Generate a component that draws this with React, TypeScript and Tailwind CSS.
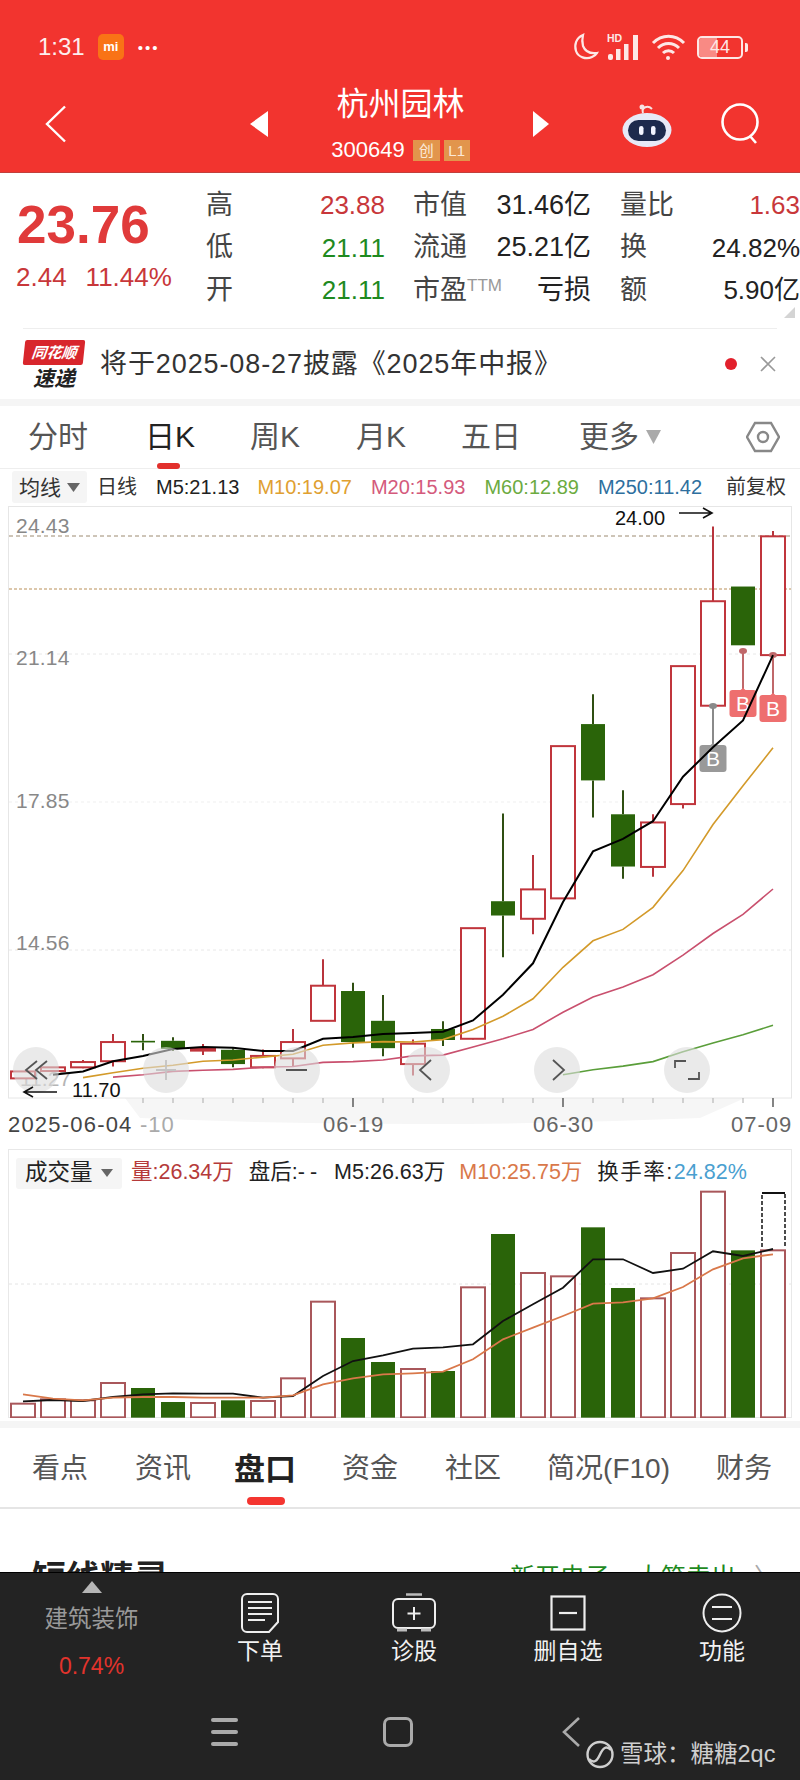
type Candle = { up: boolean; top: number; bottom: number; hi?: number; lo?: number };

// chart values are read off the picture, sy() maps them to page y
const sy = (v: number) => 500 + v / 2.45;
const vy = (v: number) => 1140 + v / 3;
const cx = (i: number) => 23 + 30 * i;

const candles: Candle[] = [
  { up: true, top: 1400, bottom: 1417 },
  { up: true, top: 1390, bottom: 1399 },
  { up: true, top: 1377, bottom: 1390, hi: 1372, lo: 1392 },
  { up: true, top: 1328, bottom: 1375, hi: 1308, lo: 1388 },
  { up: false, top: 1325, bottom: 1329, hi: 1308, lo: 1348 },
  { up: false, top: 1325, bottom: 1345, hi: 1316, lo: 1350 },
  { up: true, top: 1345, bottom: 1349, hi: 1333, lo: 1360 },
  { up: false, top: 1347, bottom: 1382, hi: 1343, lo: 1390 },
  { up: true, top: 1362, bottom: 1390, hi: 1346, lo: 1392 },
  { up: true, top: 1328, bottom: 1368, hi: 1296, lo: 1388 },
  { up: true, top: 1190, bottom: 1276, hi: 1125 },
  { up: false, top: 1203, bottom: 1328, hi: 1183, lo: 1342 },
  { up: false, top: 1276, bottom: 1343, hi: 1213, lo: 1363 },
  { up: true, top: 1332, bottom: 1382, hi: 1322, lo: 1410 },
  { up: false, top: 1296, bottom: 1323, hi: 1277, lo: 1338 },
  { up: true, top: 1049, bottom: 1320, lo: 1322 },
  { up: false, top: 983, bottom: 1018, hi: 768, lo: 1120 },
  { up: true, top: 954, bottom: 1026, hi: 870, lo: 1064 },
  { up: true, top: 603, bottom: 976 },
  { up: false, top: 549, bottom: 687, hi: 476, lo: 778 },
  { up: false, top: 770, bottom: 898, hi: 711, lo: 928 },
  { up: true, top: 790, bottom: 899, hi: 770, lo: 923 },
  { up: true, top: 407, bottom: 745, lo: 756 },
  { up: true, top: 248, bottom: 504, hi: 65 },
  { up: false, top: 212, bottom: 356 },
  { up: true, top: 89, bottom: 380, hi: 76 },
];

const ma5 = [1408, 1400, 1375, 1362, 1345, 1340, 1342, 1350, 1350, 1320, 1316, 1308, 1306, 1303, 1275, 1212, 1135, 985, 861, 830, 787, 678, 606, 540, 380];
const ma10 = [1415, 1403, 1392, 1385, 1375, 1372, 1365, 1358, 1336, 1330, 1327, 1328, 1322, 1297, 1265, 1222, 1145, 1080, 1052, 998, 908, 795, 700, 607];
const ma20 = [1414, 1408, 1400, 1397, 1395, 1390, 1388, 1378, 1376, 1372, 1362, 1360, 1340, 1320, 1297, 1255, 1218, 1193, 1163, 1115, 1062, 1015, 953];
const ma60 = [1408, 1396, 1387, 1376, 1352, 1330, 1310, 1287];

const volumes: [boolean, number][] = [
  [true, 788], [true, 775], [true, 778], [true, 726], [false, 741], [false, 783], [true, 786], [false, 778], [true, 780],
  [true, 712], [true, 482], [false, 591], [false, 663], [true, 684], [false, 690], [true, 439], [false, 279], [true, 396],
  [true, 406], [false, 259], [false, 441], [true, 472], [true, 336], [true, 152], [false, 328], [true, 328],
];
const volBlack = [781, 777, 780, 768, 760, 757, 758, 758, 770, 765, 705, 660, 643, 623, 619, 610, 540, 490, 440, 355, 355, 396, 383, 331, 345, 324];
const volOrange = [760, 773, 778, 770, 768, 768, 770, 770, 770, 763, 730, 712, 700, 697, 692, 655, 595, 560, 525, 488, 484, 472, 438, 385, 352, 340];

const line = (vals: number[], start: number, map: (v: number) => number) =>
  vals.map((v, i) => `${cx(start + i)},${map(v).toFixed(1)}`).join(" ");

const quoteRows = [
  { a: "高", av: "23.88", ac: "text-[#c8373a]", b: "市值", bv: "31.46亿", c: "量比", cv: "1.63", cc: "text-[#c8373a]" },
  { a: "低", av: "21.11", ac: "text-[#1f8a1f]", b: "流通", bv: "25.21亿", c: "换", cv: "24.82%", cc: "text-[#222]" },
  { a: "开", av: "21.11", ac: "text-[#1f8a1f]", b: "市盈", bv: "亏损", c: "额", cv: "5.90亿", cc: "text-[#222]" },
];

function Candles() {
  return (
    <>
      {candles.map((c, i) => {
        const x = cx(i);
        const color = c.up ? "#c0353c" : "#2a6409";
        const wick = c.up ? "#b8343c" : "#2f4f12";
        return (
          <g key={i}>
            {c.hi !== undefined && <line x1={x} x2={x} y1={sy(c.hi)} y2={sy(c.top)} stroke={wick} strokeWidth="2" />}
            {c.lo !== undefined && <line x1={x} x2={x} y1={sy(c.bottom)} y2={sy(c.lo)} stroke={wick} strokeWidth="2" />}
            <rect
              x={x - 12}
              y={sy(c.top)}
              width="24"
              height={sy(c.bottom) - sy(c.top)}
              fill={c.up ? "#fff" : color}
              stroke={c.up ? color : "none"}
              strokeWidth="2"
            />
          </g>
        );
      })}
    </>
  );
}

function BTag({ x, from, top, color, stem }: { x: number; from: number; top: number; color: string; stem: string }) {
  return (
    <g>
      <line x1={x} x2={x} y1={from} y2={top} stroke={stem} strokeWidth="2" />
      <ellipse cx={x} cy={from} rx="4" ry="3" fill={stem} />
      <path d={`M${x - 5} ${top + 2} L${x} ${top - 2} L${x + 5} ${top + 2}Z`} fill={color} />
      <rect x={x - 13.5} y={top} width="27" height="27" rx="3" fill={color} />
      <text x={x} y={top + 21} textAnchor="middle" fontSize="21" fill="#fff">B</text>
    </g>
  );
}

function RoundButtons() {
  const xs = [36, 166, 297, 427, 557, 687];
  return (
    <g>
      {xs.map((x) => (
        <circle key={x} cx={x} cy="1070" r="23" fill="#dcdcdc" fillOpacity="0.6" />
      ))}
      <g fill="none" stroke="#555" strokeWidth="1.8">
        <path d="M37 1061l-11 9 11 9M47 1061l-11 9 11 9" />
        <path d="M156 1070h20M166 1060v20" stroke="#c4c4c4" />
        <path d="M286 1070h21" strokeWidth="2" />
        <path d="M431 1060l-11 10 11 10" />
        <path d="M553 1060l11 10-11 10" />
        <path d="M675 1068v-7h11M699 1072v7h-11" />
      </g>
    </g>
  );
}

function PriceChart() {
  const grid: [number, string, string][] = [
    [536, "#9c8a70", "4 3"],
    [589, "#b98f58", "3 2"],
    [654, "#e8e8e8", "3 3"],
    [802, "#efefef", "3 3"],
    [950, "#e8e8e8", "3 3"],
  ];
  const labels: [string, number][] = [["24.43", 533], ["21.14", 665], ["17.85", 808], ["14.56", 950]];
  return (
    <svg width="800" height="640" viewBox="0 505 800 640" className="block">
      <path d="M125 1098H745L700 1118Q420 1130 140 1118Z" fill="#f6f6f6" />
      <rect x="8.5" y="506.5" width="783" height="591.5" fill="none" stroke="#e6e6e6" />
      {grid.map(([y, c, d]) => (
        <line key={y} x1="9" x2="791" y1={y} y2={y} stroke={c} strokeDasharray={d} />
      ))}
      {labels.map(([t, y]) => (
        <text key={t} x="16" y={y} fontSize="21" letterSpacing="0.2" fill="#888">{t}</text>
      ))}
      <text x="20" y="1086" fontSize="21" fill="#b5b5b5">11.27</text>
      <Candles />
      <polyline points={line(ma20, 3, sy)} fill="none" stroke="#c9506e" strokeWidth="1.6" />
      <polyline points={line(ma60, 18, sy)} fill="none" stroke="#5a9e3a" strokeWidth="1.6" />
      <polyline points={line(ma10, 2, sy)} fill="none" stroke="#d39a2a" strokeWidth="1.6" />
      <BTag x={713} from={706} top={745} color="#999999" stem="#8a8a8a" />
      <BTag x={743} from={651} top={690} color="#ee6f6f" stem="#c0686a" />
      <BTag x={773} from={655} top={695} color="#ee6f6f" stem="#c0686a" />
      <polyline points={line(ma5, 1, sy)} fill="none" stroke="#000" strokeWidth="2" />
      <RoundButtons />
      <text x="615" y="525" fontSize="20" fill="#111">24.00</text>
      <path d="M679 513h33M703 508l9 5-9 5" fill="none" stroke="#111" strokeWidth="1.6" />
      <text x="72" y="1097" fontSize="20" fill="#111">11.70</text>
      <path d="M57 1092H24M33 1087l-9 5 9 5" fill="none" stroke="#111" strokeWidth="1.6" />
      {candles.map((_, i) =>
        i < 4 ? null : (
          <line
            key={i}
            x1={cx(i)}
            x2={cx(i)}
            y1="1098"
            y2={i === 11 || i === 18 || i === 25 ? 1107 : 1103}
            stroke={i === 11 || i === 18 || i === 25 ? "#666" : "#aaa"}
            strokeWidth={i === 11 || i === 18 || i === 25 ? 1.6 : 1}
          />
        ),
      )}
      <text x="8" y="1132" fontSize="22" letterSpacing="1.2" fill="#444">2025-06-04</text>
      <text x="140" y="1132" fontSize="22" letterSpacing="1" fill="#aaa">-10</text>
      <text x="323" y="1132" fontSize="22" letterSpacing="1" fill="#666">06-19</text>
      <text x="533" y="1132" fontSize="22" letterSpacing="1" fill="#666">06-30</text>
      <text x="731" y="1132" fontSize="22" letterSpacing="1" fill="#666">07-09</text>
    </svg>
  );
}

function VolumeChart() {
  return (
    <svg width="783" height="229" viewBox="9 1188 783 229" className="block">
      <line x1="9" x2="791" y1="1283" y2="1283" stroke="#e4e4e4" strokeDasharray="3 3" />
      {volumes.map(([up, top], i) =>
        up ? (
          <rect key={i} x={cx(i) - 12} y={vy(top)} width="24" height={vy(829) - vy(top)} fill="#fff" stroke="#a9575b" strokeWidth="2" />
        ) : (
          <rect key={i} x={cx(i) - 12} y={vy(top)} width="24" height={vy(830) - vy(top)} fill="#2a6409" />
        ),
      )}
      <path d="M762 1246V1192H785V1246" fill="none" stroke="#111" strokeWidth="1.5" strokeDasharray="4 2" />
      <line x1="762" x2="785" y1="1192" y2="1192" stroke="#111" strokeWidth="2" />
      <polyline points={line(volBlack, 0, vy)} fill="none" stroke="#111" strokeWidth="1.8" />
      <polyline points={line(volOrange, 0, vy)} fill="none" stroke="#d9784a" strokeWidth="1.8" />
    </svg>
  );
}

function StatusIcons() {
  return (
    <div className="flex items-center text-white">
      <svg width="26" height="28" viewBox="0 0 26 28" fill="none" stroke="#fde8e6" strokeWidth="2.2">
        <path d="M10 2C3 5 1 12 3 18c2 6 10 9 16 6 2-1 4-2 5-4-7 1-12-2-14-7-1-4-1-7 0-11Z" />
      </svg>
      <svg width="38" height="30" viewBox="0 0 38 30" className="ml-[8px]" fill="#fde8e6">
        <text x="0" y="10" fontSize="10.5" fontWeight="700">HD</text>
        <rect x="1" y="22" width="5" height="6" rx="2" />
        <rect x="9" y="17" width="4.5" height="11" />
        <rect x="17" y="12" width="4.5" height="16" />
        <rect x="26" y="3" width="5" height="25" />
      </svg>
      <svg width="36" height="30" viewBox="0 0 36 30" className="ml-[6px]" fill="none" stroke="#fde8e6" strokeWidth="3">
        <path d="M2 11C11 2 24 2 33 11" />
        <path d="M7 16c6-6 15-6 21 0" />
        <path d="M12 21c3-3 8-3 11 0" />
        <circle cx="17" cy="26" r="2" fill="#fde8e6" stroke="none" />
      </svg>
      <div className="ml-[10px] flex items-center">
        <div className="relative h-[23px] w-[46px] rounded-[5px] border-2 border-[#fde8e6]">
          <div className="h-full w-[44%] rounded-l-[3px] bg-[#f98a84]" />
          <span className="absolute inset-0 flex items-center justify-center text-[18px] leading-none text-[#fde8e6]">44</span>
        </div>
        <div className="ml-[2px] h-[9px] w-[3px] rounded-r-[2px] bg-[#fde8e6]" />
      </div>
    </div>
  );
}

function Robot() {
  return (
    <svg width="50" height="46" viewBox="0 0 50 46">
      <path d="M21 12c-2-6 5-8 9-4" fill="none" stroke="#f7e3e3" strokeWidth="2" />
      <circle cx="20" cy="6" r="2.5" fill="#f7e3e3" />
      <ellipse cx="25" cy="29" rx="24.5" ry="17" fill="#e7e9f7" />
      <rect x="6" y="19" width="38" height="21" rx="10.5" fill="#1d2a4d" />
      <rect x="17" y="25" width="4.5" height="9" rx="2.2" fill="#f3f5ff" />
      <rect x="29" y="25" width="4.5" height="9" rx="2.2" fill="#f3f5ff" />
    </svg>
  );
}

function Header() {
  return (
    <header className="h-[173px] shrink-0 border-b border-[#c2403c] bg-[#f2342f] pt-[32px] text-white">
      <div className="flex h-[30px] items-center justify-between pr-[52px] pl-[38px]">
        <div className="flex items-center">
          <span className="text-[24px] leading-none text-[#fdeeee]">1:31</span>
          <div className="ml-[13px] flex h-[26px] w-[26px] items-center justify-center rounded-[5px] bg-[#f97316] text-[13px] font-bold">mi</div>
          <span className="ml-[14px] text-[15px] leading-none tracking-[2px]">•••</span>
        </div>
        <StatusIcons />
      </div>
      <div className="mt-[24px] flex h-[75px] items-center pl-[45px]">
        <svg width="21" height="38" viewBox="0 0 21 38" fill="none" stroke="#fff" strokeWidth="2.4">
          <path d="M20 1.5 2 19l18 17.5" />
        </svg>
        <svg width="18" height="26" viewBox="0 0 18 26" className="ml-[184px]" fill="#fff"><path d="M18 0v26L0 13Z" /></svg>
        <div className="flex w-[265px] flex-col items-center">
          <div className="text-[32px] leading-[36px] text-white">杭州园林</div>
          <div className="mt-[17px] flex h-[22px] items-center gap-[4px]">
            <span className="mr-[4px] text-[22px] leading-none">300649</span>
            <span className="flex h-[21px] w-[27px] items-center justify-center bg-[#e2954c] text-[15px] leading-none text-[#fbe9d8]">创</span>
            <span className="flex h-[21px] w-[26px] items-center justify-center bg-[#e2954c] text-[15px] leading-none text-[#fbe9d8]">L1</span>
          </div>
        </div>
        <svg width="16" height="26" viewBox="0 0 16 26" fill="#fff"><path d="M0 0v26l16-13Z" /></svg>
        <div className="ml-[73px]"><Robot /></div>
        <svg width="40" height="42" viewBox="0 0 40 42" className="ml-[49px]" fill="none" stroke="#fff" strokeWidth="2.6">
          <circle cx="19" cy="19" r="17.5" />
          <path d="M29 33l6 7" />
        </svg>
      </div>
    </header>
  );
}

function QuotePanel() {
  return (
    <section className="relative flex h-[155px] shrink-0 pt-[11px]">
      <div className="w-[206px] pl-[17px]">
        <div className="mt-[11px] text-[53px] leading-[60px] font-bold text-[#e03a3a]">23.76</div>
        <div className="mt-[7px] -ml-[1px] flex text-[26px] leading-[30px] text-[#c8373a]">
          <span>2.44</span>
          <span className="ml-[19px]">11.44%</span>
        </div>
      </div>
      <div className="w-[594px] shrink-0">
        {quoteRows.map((r) => (
          <div key={r.a} className="flex h-[42.5px] items-center text-[27px] leading-none text-[#444]">
            <div className="flex w-[179px] items-center justify-between">
              <span>{r.a}</span>
              <span className={`text-[26px] ${r.ac}`}>{r.av}</span>
            </div>
            <div className="ml-[28px] flex w-[178px] items-center justify-between">
              <span className="flex items-start">
                {r.b}
                {r.b === "市盈" && <span className="text-[17px] text-[#999]">TTM</span>}
              </span>
              <span className="text-[27px] text-[#222]">{r.bv}</span>
            </div>
            <div className="ml-[29px] flex w-[180px] items-center justify-between">
              <span>{r.c}</span>
              <span className={`text-[26px] ${r.cc}`}>{r.cv}</span>
            </div>
          </div>
        ))}
      </div>
      <svg width="11" height="11" viewBox="0 0 11 11" className="absolute top-[134px] right-[5px]" fill="#d4d4d4"><path d="M11 0v11H0Z" /></svg>
    </section>
  );
}

function Banner() {
  return (
    <section className="mx-[23px] flex h-[71px] shrink-0 items-center border-t border-[#eeeeee]">
      <div className="ml-[1px] flex w-[60px] flex-col items-center">
        <div className="relative flex h-[25px] w-[60px] -skew-x-6 items-center justify-center rounded-[2px] bg-[#d8262c] text-[15px] leading-none font-bold text-white italic">
          同花顺
        </div>
        <div className="mt-[3px] text-[21px] leading-none font-bold text-[#222] italic">速递</div>
      </div>
      <span className="ml-[16px] text-[27px] leading-none tracking-[0.9px] text-[#333]">将于2025-08-27披露《2025年中报》</span>
      <div className="ml-auto flex items-center">
        <div className="h-[12px] w-[12px] rounded-full bg-[#e2202c]" />
        <svg width="18" height="18" viewBox="0 0 18 18" className="ml-[22px]" fill="none" stroke="#999" strokeWidth="1.6">
          <path d="M2 2l14 14M16 2 2 16" />
        </svg>
      </div>
    </section>
  );
}

function PeriodTabs() {
  return (
    <nav className="flex h-[63px] shrink-0 items-center border-b border-[#eeeeee] text-[30px] leading-none text-[#555]">
      <span className="ml-[28px]">分时</span>
      <span className="relative ml-[57px] text-[#222]">
        日K
        <span className="absolute top-[41px] left-[12px] h-[6px] w-[23px] rounded-full bg-[#e2302c]" />
      </span>
      <span className="ml-[55px]">周K</span>
      <span className="ml-[56px]">月K</span>
      <span className="ml-[55px]">五日</span>
      <span className="ml-[58px]">更多</span>
      <svg width="15" height="14" viewBox="0 0 15 14" className="ml-[7px]" fill="#aaa"><path d="M0 0h15L7.5 14Z" /></svg>
      <svg width="34" height="32" viewBox="0 0 34 32" className="ml-[85px]" fill="none" stroke="#888" strokeWidth="2.4">
        <path d="M9 2h16l8 14-8 14H9L1 16Z" />
        <circle cx="17" cy="16" r="5" />
      </svg>
    </nav>
  );
}

function MaRow() {
  return (
    <div className="flex h-[36px] shrink-0 items-center text-[20px] leading-none whitespace-nowrap">
      <div className="ml-[12px] flex h-[32px] w-[75px] items-center rounded-[3px] bg-[#f5f5f5] pl-[7px] text-[21px] text-[#333]">
        均线
        <svg width="13" height="9" viewBox="0 0 13 9" className="ml-[6px]" fill="#666"><path d="M0 0h13L6.5 9Z" /></svg>
      </div>
      <span className="ml-[10px] text-[#333]">日线</span>
      <span className="ml-[19px] text-[#222]">M5:21.13</span>
      <span className="ml-[18px] text-[#e0a030]">M10:19.07</span>
      <span className="ml-[19px] text-[#d45a7c]">M20:15.93</span>
      <span className="ml-[19px] text-[#6cab3f]">M60:12.89</span>
      <span className="ml-[19px] text-[#2e6f9e]">M250:11.42</span>
      <span className="ml-[24px] text-[#333]">前复权</span>
    </div>
  );
}

function VolumePanel() {
  return (
    <section className="mx-[8px] mt-[4px] h-[269px] shrink-0 border border-[#e8e8e8]">
      <div className="flex h-[39px] items-center pt-[7px] text-[21.5px] leading-none whitespace-nowrap">
        <div className="ml-[7px] flex h-[31px] w-[106px] items-center rounded-[3px] bg-[#f5f5f5] pl-[9px] text-[22.5px] text-[#222]">
          成交量
          <svg width="12" height="8" viewBox="0 0 12 8" className="ml-[8px]" fill="#666"><path d="M0 0h12L6 8Z" /></svg>
        </div>
        <span className="ml-[9px] text-[#b53a3a]">量:26.34万</span>
        <span className="ml-[15px] text-[#222]">
          盘后:<span className="tracking-[5px]">--</span>
        </span>
        <span className="ml-[12px] text-[#222]">M5:26.63万</span>
        <span className="ml-[14px] text-[#d9784a]">M10:25.75万</span>
        <span className="ml-[15px] tracking-[1.5px] text-[#222]">换手率:</span>
        <span className="text-[#4a9fd0]">24.82%</span>
      </div>
      <VolumeChart />
    </section>
  );
}

function InfoTabs() {
  return (
    <nav className="mt-[3px] flex h-[78px] shrink-0 items-center border-b-2 border-[#e5e5e5] text-[28px] leading-none text-[#555]">
      <span className="ml-[32px]">看点</span>
      <span className="ml-[47px]">资讯</span>
      <span className="relative ml-[43px] text-[31px] font-bold text-[#222]">
        盘口
        <span className="absolute top-[43px] left-[13px] h-[8px] w-[38px] rounded-full bg-[#f43530]" />
      </span>
      <span className="ml-[46px]">资金</span>
      <span className="ml-[47px]">社区</span>
      <span className="ml-[46px]">简况(F10)</span>
      <span className="ml-[46px]">财务</span>
    </nav>
  );
}

function ClippedSection() {
  return (
    <section className="flex h-[63px] shrink-0 items-start overflow-hidden pt-[52px]">
      <span className="ml-[32px] text-[34px] leading-none font-bold text-[#222]">短线精灵</span>
      <span className="mt-[4px] ml-[342px] text-[25px] leading-none whitespace-nowrap text-[#1f8a1f]">新开电子</span>
      <span className="mt-[4px] ml-[26px] text-[25px] leading-none whitespace-nowrap text-[#1f8a1f]">大笔卖出</span>
      <span className="mt-[4px] ml-[18px] text-[25px] leading-none text-[#aaa]">〉</span>
    </section>
  );
}

function ActionItem({ icon, label }: { icon: React.ReactNode; label: string }) {
  return (
    <div className="flex w-[154px] flex-col items-center pt-[20px]">
      <div className="flex h-[40px] items-center justify-center">{icon}</div>
      <span className="mt-[6px] text-[23px] leading-[24px] text-[#f2f2f2]">{label}</span>
    </div>
  );
}

function BottomBar() {
  return (
    <footer className="relative flex-1 border-t border-black bg-[#232323]">
      <div className="flex">
        <div className="flex w-[183px] flex-col items-center pt-[8px]">
          <svg width="20" height="12" viewBox="0 0 20 12" fill="#b5b5b5"><path d="M10 0l10 12H0Z" /></svg>
          <span className="mt-[13px] text-[23.5px] leading-[26px] text-[#999]">建筑装饰</span>
          <span className="mt-[21px] text-[23px] leading-[26px] text-[#e2332c]">0.74%</span>
        </div>
        <ActionItem
          label="下单"
          icon={
            <svg width="38" height="40" viewBox="0 0 38 40" fill="none" stroke="#eee" strokeWidth="2">
              <path d="M6 1h26a5 5 0 0 1 5 5v23l-9 10H6a5 5 0 0 1-5-5V6a5 5 0 0 1 5-5Z" />
              <path d="M7 9h24M7 15h24M7 21h24M7 27h17" />
            </svg>
          }
        />
        <ActionItem
          label="诊股"
          icon={
            <svg width="44" height="40" viewBox="0 0 44 40" fill="none" stroke="#eee" strokeWidth="2">
              <path d="M14 1.5h16" strokeWidth="2.5" stroke="#bbb" />
              <rect x="1" y="6" width="42" height="29" rx="5" />
              <path d="M22 14v13M15.5 20.5h13" />
              <path d="M5 37h10M29 37h10" strokeWidth="3" stroke="#bbb" />
            </svg>
          }
        />
        <ActionItem
          label="删自选"
          icon={
            <svg width="36" height="36" viewBox="0 0 36 36" fill="none" stroke="#eee" strokeWidth="2.2">
              <rect x="1.5" y="1.5" width="33" height="33" />
              <path d="M9 18h18" />
            </svg>
          }
        />
        <ActionItem
          label="功能"
          icon={
            <svg width="40" height="40" viewBox="0 0 40 40" fill="none" stroke="#eee" strokeWidth="2">
              <circle cx="20" cy="20" r="18.5" />
              <path d="M10 14h20M10 26h20" />
            </svg>
          }
        />
      </div>
      <div className="absolute top-[145px] left-[211px] flex h-[28px] w-[27px] flex-col justify-between">
        <div className="h-[4px] rounded-full bg-[#aaa]" />
        <div className="h-[4px] rounded-full bg-[#aaa]" />
        <div className="h-[4px] rounded-full bg-[#aaa]" />
      </div>
      <div className="absolute top-[144px] left-[383px] h-[30px] w-[30px] rounded-[7px] border-[3px] border-[#aaa]" />
      <svg width="20" height="32" viewBox="0 0 20 32" className="absolute top-[143px] left-[561px]" fill="none" stroke="#aaa" strokeWidth="2.6">
        <path d="M18 2 3 16l15 14" />
      </svg>
      <div className="absolute top-[167px] left-[586px] flex items-center text-[23.5px] leading-none text-[#cfcfcf]">
        <svg width="28" height="29" viewBox="0 0 28 29" fill="none" stroke="#cfcfcf" strokeWidth="2.4">
          <circle cx="14" cy="14.5" r="12.5" />
          <path d="M3 19C8 24 11 21 14 14.500S20 5 25 10" />
        </svg>
        <span className="ml-[6px]">雪球：糖糖2qc</span>
      </div>
    </footer>
  );
}

export default function App() {
  return (
    <div className="flex h-[1780px] w-[800px] flex-col overflow-hidden bg-white font-['Liberation_Sans','Noto_Sans_CJK_SC',sans-serif]">
      <Header />
      <QuotePanel />
      <Banner />
      <div className="h-[7px] shrink-0 bg-[#f5f5f5]" />
      <PeriodTabs />
      <MaRow />
      <PriceChart />
      <VolumePanel />
      <div className="mt-[3px] h-[7px] shrink-0 bg-[#f5f5f5]" />
      <InfoTabs />
      <ClippedSection />
      <BottomBar />
    </div>
  );
}
